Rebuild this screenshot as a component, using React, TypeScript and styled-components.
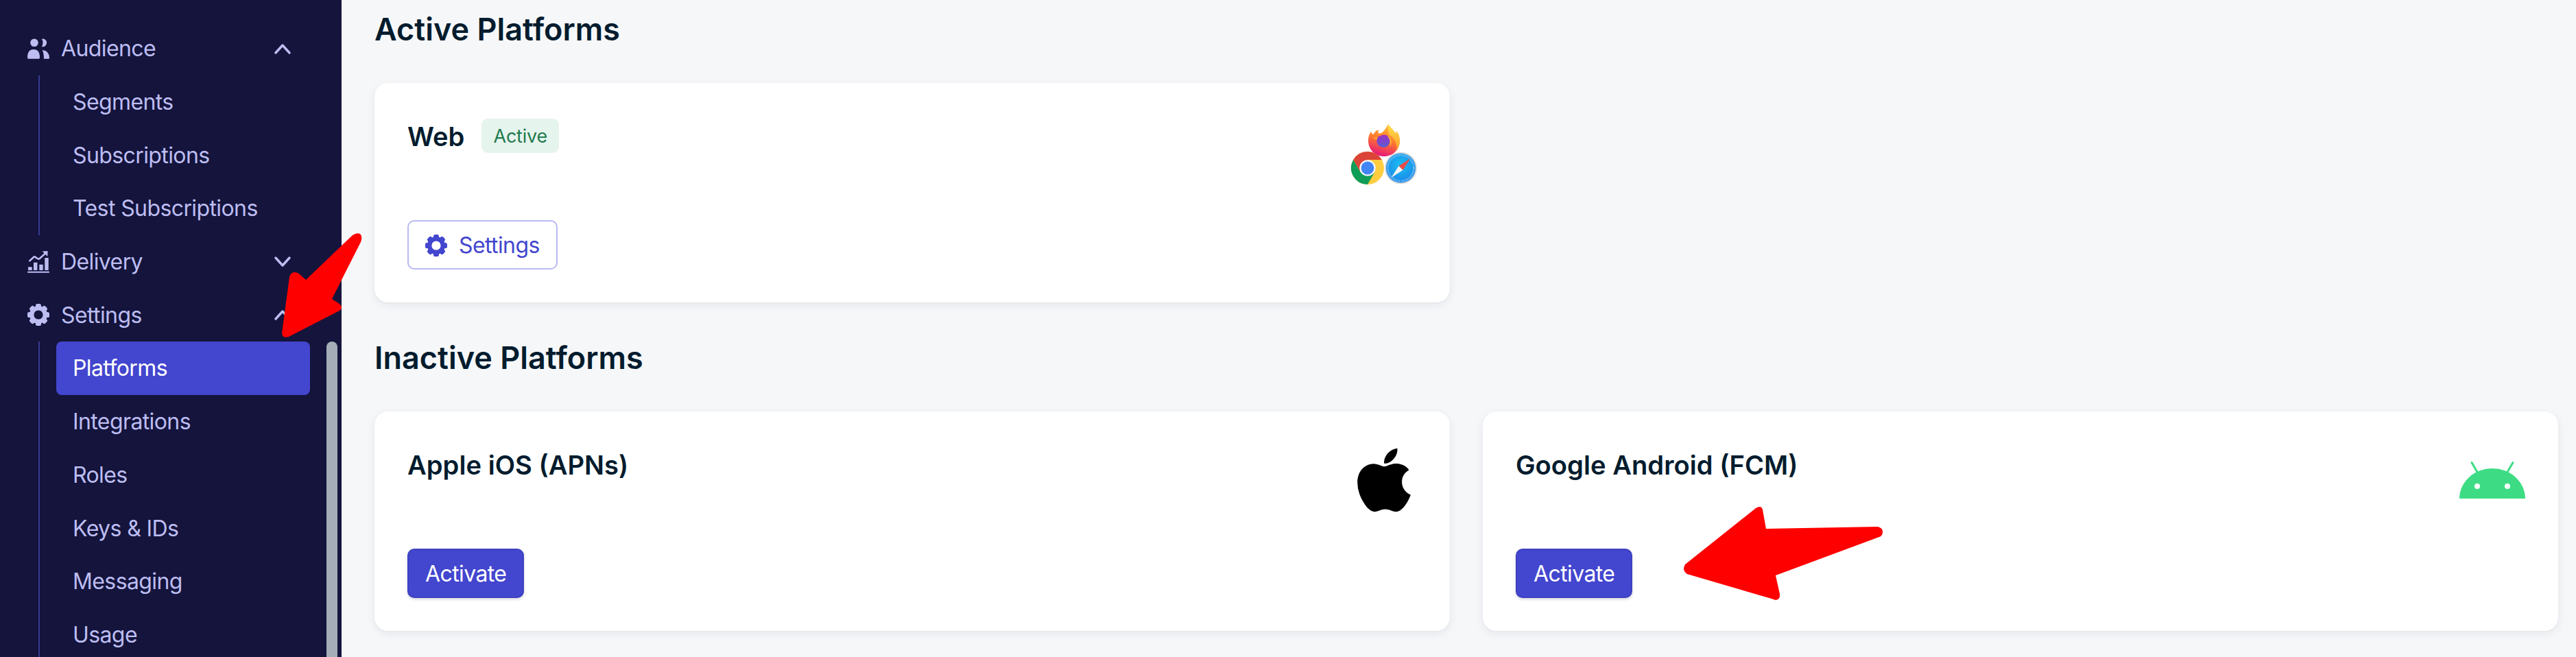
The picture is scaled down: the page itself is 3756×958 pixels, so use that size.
import React from "react";
import styled, { createGlobalStyle } from "styled-components";
import { FaApple } from "react-icons/fa";

const Global = createGlobalStyle`
  html, body { margin: 0; padding: 0; width: 3756px; height: 958px; overflow: hidden; background: #f6f7f9; }
  * { box-sizing: border-box; }
  body { font-family: Inter, "Liberation Sans", sans-serif; -webkit-font-smoothing: antialiased; }
`;

const Page = styled.div`
  position: relative;
  display: flex;
  width: 3756px;
  height: 958px;
  overflow: hidden;
`;
const Sidebar = styled.aside`
  position: relative;
  flex: 0 0 498px;
  height: 958px;
  overflow: hidden;
  background: #14143c;
  padding: 32px 46px 0 40px;
`;
const Scrollbar = styled.div`
  position: absolute;
  left: 476px;
  top: 498px;
  width: 16px;
  height: 480px;
  border-radius: 8px;
  background: #a4adb8;
`;
const GroupRow = styled.div`
  display: flex;
  align-items: center;
  height: 77.7px;
  color: #bdbdf2;
  font-size: 32px;
  letter-spacing: -0.6px;
  gap: 17px;
`;
const GroupIcon = styled.span`
  display: flex;
  width: 32px;
  height: 32px;
  flex: none;
  svg { display: block; width: 32px; height: 32px; fill: currentColor; }
`;
const GroupLabel = styled.span`
  flex: 1;
`;
const Chevron = styled.svg`
  flex: none;
  width: 24px;
  height: 16px;
  margin-right: 28px;
  fill: none;
  stroke: #bdbdf2;
  stroke-width: 3.4;
  stroke-linecap: round;
  stroke-linejoin: round;
`;
const SubList = styled.div`
  margin-left: 16px;
  padding-left: 24px;
  border-left: 2px solid #363a8e;
`;
const SubItem = styled.div<{ $active?: boolean }>`
  display: flex;
  align-items: center;
  height: 77.7px;
  padding-left: 24px;
  border-radius: 8px;
  font-size: 32px;
  letter-spacing: -0.6px;
  color: ${(p) => (p.$active ? "#ffffff" : "#bdbdf2")};
  background: ${(p) => (p.$active ? "#4346ce" : "transparent")};
`;

const Main = styled.main`
  flex: 1;
  padding: 16px 26px 0 48px;
  display: flex;
  flex-direction: column;
`;
const Heading = styled.h2<{ $gap: number }>`
  margin: ${(p) => p.$gap}px 0 0;
  height: 54px;
  line-height: 54px;
  font-size: 45px;
  font-weight: 600;
  color: #031c2e;
`;
const Grid = styled.div`
  margin-top: 51px;
  display: grid;
  grid-template-columns: 1568px 1568px;
  gap: 48px;
`;
const Card = styled.section`
  height: 320px;
  padding: 48px;
  background: #fff;
  border-radius: 20px;
  box-shadow: 0 4px 14px rgba(20, 30, 50, 0.07), 0 1px 3px rgba(20, 30, 50, 0.04);
  display: flex;
  justify-content: space-between;
`;
const CardBody = styled.div`
  display: flex;
  flex-direction: column;
  justify-content: space-between;
  align-items: flex-start;
`;
const TitleRow = styled.div`
  display: flex;
  align-items: center;
  gap: 25px;
`;
const Title = styled.h3`
  margin: 0;
  padding-top: 2px;
  font-size: 38.2px;
  line-height: 56px;
  font-weight: 600;
  color: #031c2e;
`;
const Badge = styled.span`
  display: inline-flex;
  align-items: center;
  height: 50px;
  padding: 0 17px;
  border-radius: 9px;
  background: #e6f4ee;
  color: #1f7a4d;
  font-size: 27px;
  letter-spacing: -0.2px;
`;
const LogoBox = styled.div`
  flex: none;
  width: 96px;
  height: 96px;
  margin-top: 4px;
  svg { display: block; width: 96px; height: 96px; }
`;
const AppleBox = styled(LogoBox)`
  svg { transform: scale(1.1); }
`;
const Button = styled.button`
  display: inline-flex;
  align-items: center;
  height: 72px;
  padding: 2px 24px 0;
  border-radius: 10px;
  font-family: inherit;
  font-size: 32px;
  letter-spacing: -0.6px;
  line-height: 1;
`;
const PrimaryButton = styled(Button)`
  padding: 2px 24px 0;
  color: #fff;
  background: #4346ce;
  border: 2px solid #3f42c0;
  box-shadow: 0 2px 4px rgba(20, 30, 60, 0.18);
`;
const OutlineButton = styled(Button)`
  gap: 17px;
  color: #4346ce;
  background: #fff;
  border: 2.4px solid #b9b9f2;
  svg { width: 32px; height: 32px; fill: currentColor; stroke: currentColor; flex: none; }
`;
const ArrowLayer = styled.svg`
  position: absolute;
  inset: 0;
  width: 3756px;
  height: 958px;
  pointer-events: none;
  fill: #fe0000;
`;

const PeopleIcon = () => (
  <svg viewBox="0 0 32 32">
    <circle cx="10" cy="7.3" r="5.8" />
    <path d="M0 29Q0 17 9 17Q18 17 18 29Q18 30.7 16.5 30.7L1.5 30.7Q0 30.7 0 29Z" />
    <path d="M21 1.7A5.8 5.8 0 1 1 21 13Q24 7.3 21 1.7Z" />
    <path d="M21.7 18Q32 19 32 29.5Q32 30.7 30.8 30.7L24 30.7Q24 23 21.7 18Z" />
  </svg>
);
const ChartIcon = () => (
  <svg viewBox="0 0 32 32">
    <rect x="1" y="23.3" width="5.7" height="4.7" rx="0.6" />
    <rect x="9" y="16.7" width="5.4" height="11.3" rx="0.6" />
    <rect x="17.3" y="19.7" width="5.4" height="8.3" rx="0.6" />
    <rect x="25.3" y="10" width="5.4" height="18" rx="0.6" />
    <rect x="0" y="29.7" width="32" height="2" rx="0.6" />
    <path d="M3.3 14.3L9.5 8.6Q10.3 8 11.5 8.8L15 11.2Q16.5 12 17.8 10.9L27 2.6" fill="none" stroke="currentColor" strokeWidth="2.6" strokeLinecap="round" />
    <path d="M21.6 0.4L29.6 0L29.3 8Z" />
  </svg>
);
const GearIcon = () => (
  <svg viewBox="0 0 32 32">
    <circle cx="16" cy="16" r="9.8" fill="none" stroke="currentColor" strokeWidth="6.4" />
    {[0, 45, 90, 135, 180, 225, 270, 315].map((a) => (
      <rect key={a} x="12" y="0" width="8" height="8" rx="2.6" stroke="none" fill="currentColor" transform={`rotate(${a} 16 16)`} />
    ))}
  </svg>
);
const ChevronIcon = ({ up }: { up?: boolean }) => (
  <Chevron viewBox="0 0 24 16">
    <path d={up ? "M2 14L12 3L22 14" : "M2 2L12 13L22 2"} />
  </Chevron>
);

const BrowsersLogo = () => (
  <svg viewBox="0 0 96 96">
    <defs>
      <linearGradient id="ffBase" x1="0.7" y1="0" x2="0.4" y2="1">
        <stop offset="0" stopColor="#ffc23a" />
        <stop offset="0.5" stopColor="#ff7a2e" />
        <stop offset="1" stopColor="#e6147a" />
      </linearGradient>
      <linearGradient id="ffFlame" x1="0.5" y1="0" x2="0.5" y2="1">
        <stop offset="0" stopColor="#ffe14a" />
        <stop offset="1" stopColor="#ff9a2a" />
      </linearGradient>
      <linearGradient id="ffCore" x1="0.5" y1="0" x2="0.5" y2="1">
        <stop offset="0" stopColor="#a22cc0" />
        <stop offset="1" stopColor="#5a5fd2" />
      </linearGradient>
      <radialGradient id="sfBlue" cx="0.5" cy="0.4" r="0.6">
        <stop offset="0" stopColor="#1cc0f0" />
        <stop offset="1" stopColor="#1a86ea" />
      </radialGradient>
    </defs>
    <g transform="translate(25 8)">
      <path d="M29 0C32 5 37 8 40 14C41 11 41 11 41 10C45 15 46 20 46 24C46 37 36 47 23 47C10 47 0 37 0 24C0 19 1 15 4 11C5 13 6 15 7 15C9 12 12 9 15 8C14 11 15 13 16 15C20 13 24 10 29 0Z" fill="url(#ffBase)" />
      <path d="M29 0C32 5 37 8 40 14C41 11 41 11 41 10C45 15 46 20 46 24C46 30 44 35 41 39C43 28 38 20 30 15C29 8 28 5 29 0Z" fill="url(#ffFlame)" />
      <path d="M7 20L21 19L18 25Z" fill="#ffb02e" />
      <circle cx="22" cy="24.5" r="9.6" fill="url(#ffCore)" />
      <path d="M28 17C34 20 35 27 32 33C30 37 34 29 31 22Z" fill="#ffc23a" />
      <path d="M15 14C20 12 26 13 29 17C25 15 20 15 17 18Z" fill="#ff8a2a" />
    </g>
    <g transform="translate(0 48)">
      <circle cx="24" cy="24" r="24" fill="#ffcd40" />
      <path d="M3.2 12A24 24 0 0 1 44.8 12L24 12L13.6 30Z" fill="#db4437" />
      <path d="M3.2 12L13.6 30L34.4 30L24 48A24 24 0 0 1 3.2 12Z" fill="#0f9d58" />
      <circle cx="24" cy="24" r="11.8" fill="#f3f6fb" />
      <circle cx="24" cy="24" r="9.4" fill="#4285f4" />
    </g>
    <g transform="translate(49 48)">
      <circle cx="23.5" cy="24" r="23.5" fill="#dcdcdc" />
      <circle cx="23.5" cy="24" r="21.5" fill="url(#sfBlue)" />
      <circle cx="23.5" cy="24" r="19" fill="none" stroke="#d6eefc" strokeWidth="2.6" strokeDasharray="0.7 1.7" />
      <path d="M37.5 10L20.5 21L26.5 27Z" fill="#ef4a45" />
      <path d="M9.5 38L20.5 21L26.5 27Z" fill="#f4f4f4" />
    </g>
  </svg>
);
const AndroidLogo = () => (
  <svg viewBox="0 0 96 96" fill="#3ddc84">
    <path d="M0 75A48 44 0 0 1 96 75Z" />
    <path d="M18 22.5L27 38M78 22.5L69 38" stroke="#3ddc84" strokeWidth="3" strokeLinecap="round" fill="none" />
    <circle cx="26" cy="57" r="4" fill="#fff" />
    <circle cx="70" cy="57" r="4" fill="#fff" />
  </svg>
);

const audience = ["Segments", "Subscriptions", "Test Subscriptions"];
const settings = ["Platforms", "Integrations", "Roles", "Keys & IDs", "Messaging", "Usage"];

export default function App() {
  return (
    <Page>
      <Global />
      <Sidebar>
        <GroupRow>
          <GroupIcon><PeopleIcon /></GroupIcon>
          <GroupLabel>Audience</GroupLabel>
          <ChevronIcon up />
        </GroupRow>
        <SubList>
          {audience.map((t) => <SubItem key={t}>{t}</SubItem>)}
        </SubList>
        <GroupRow>
          <GroupIcon><ChartIcon /></GroupIcon>
          <GroupLabel>Delivery</GroupLabel>
          <ChevronIcon />
        </GroupRow>
        <GroupRow>
          <GroupIcon><GearIcon /></GroupIcon>
          <GroupLabel>Settings</GroupLabel>
          <ChevronIcon up />
        </GroupRow>
        <SubList>
          {settings.map((t) => <SubItem key={t} $active={t === "Platforms"}>{t}</SubItem>)}
        </SubList>
        <Scrollbar />
      </Sidebar>
      <Main>
        <Heading $gap={0}>Active Platforms</Heading>
        <Grid>
          <Card>
            <CardBody>
              <TitleRow>
                <Title>Web</Title>
                <Badge>Active</Badge>
              </TitleRow>
              <OutlineButton><GearIcon />Settings</OutlineButton>
            </CardBody>
            <LogoBox><BrowsersLogo /></LogoBox>
          </Card>
        </Grid>
        <Heading $gap={54}>Inactive Platforms</Heading>
        <Grid>
          <Card>
            <CardBody>
              <Title>Apple iOS (APNs)</Title>
              <PrimaryButton>Activate</PrimaryButton>
            </CardBody>
            <AppleBox><FaApple /></AppleBox>
          </Card>
          <Card>
            <CardBody>
              <Title>Google Android (FCM)</Title>
              <PrimaryButton>Activate</PrimaryButton>
            </CardBody>
            <LogoBox><AndroidLogo /></LogoBox>
          </Card>
        </Grid>
      </Main>
      <ArrowLayer viewBox="0 0 3756 958">
        <path d="M446 408L514 343Q520 339 525 341Q529 345 526 353L484 436L495 443Q501 449 495 453L421 491Q412 494 411 486L422 404Q424 396 431 397Q435 398 437 400Z" />
        <path d="M2575 771L2738 768Q2746 770 2745 777Q2744 782 2740 783L2589 839L2595 866Q2596 874 2589 875L2583 873L2460 837Q2452 832 2457 823L2560 741Q2568 736 2570 743Z" />
      </ArrowLayer>
    </Page>
  );
}
